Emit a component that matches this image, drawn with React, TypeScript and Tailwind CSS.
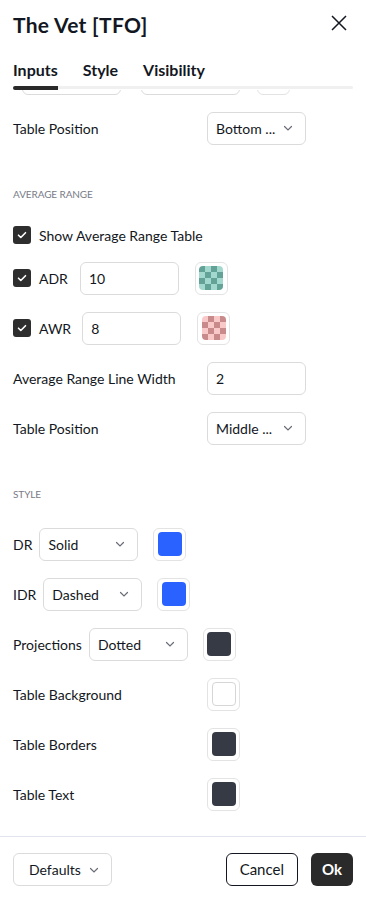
import type { ReactNode } from "react";

function Chevron() {
  return (
    <svg width="18" height="18" viewBox="0 0 18 18" className="shrink-0 text-[#6a6d78]">
      <path d="M5.5 7.5l3.5 3.5 3.5-3.5" fill="none" stroke="currentColor" strokeWidth="1.2" strokeLinecap="round" />
    </svg>
  );
}

function Box({ children, className = "" }: { children?: ReactNode; className?: string }) {
  return (
    <div className={`flex h-[33px] w-[99px] shrink-0 items-center rounded-md border border-[#dbdbdb] bg-white ${className}`}>
      {children}
    </div>
  );
}

function TextInput({ value }: { value: string }) {
  return (
    <Box className="px-2 text-[14px] text-[#131722]">
      <span>{value}</span>
    </Box>
  );
}

function Select({ value, className = "" }: { value: string; className?: string }) {
  return (
    <Box className={`justify-between pr-2 pl-2 text-[14px] text-[#131722] ${className}`}>
      <span className="whitespace-nowrap">{value}</span>
      <Chevron />
    </Box>
  );
}

function Checker({ dark, light, start }: { dark: string; light: string; start: "dark" | "light" }) {
  const cells = Array.from({ length: 16 }, (_, i) => {
    const even = (Math.floor(i / 4) + (i % 4)) % 2 === 0;
    const isDark = start === "dark" ? even : !even;
    return isDark ? dark : light;
  });
  return (
    <div className="grid h-6 w-6 grid-cols-4 overflow-hidden rounded-[4px]">
      {cells.map((c, i) => (
        <div key={i} style={{ backgroundColor: c }} />
      ))}
    </div>
  );
}

function Swatch({ children }: { children: ReactNode }) {
  return (
    <div className="flex h-[33px] w-[33px] shrink-0 items-center justify-center rounded-md border border-[#e3e3e3] bg-white">
      {children}
    </div>
  );
}

function Solid({ color, bordered = false }: { color: string; bordered?: boolean }) {
  return (
    <div
      className={`h-6 w-6 rounded-[4px] ${bordered ? "border border-[#d6d6d6]" : ""}`}
      style={{ backgroundColor: color }}
    />
  );
}

function Checkbox() {
  return (
    <div className="flex h-[18px] w-[18px] shrink-0 items-center justify-center rounded-[3px] bg-[#2e2e2e]">
      <svg width="12" height="12" viewBox="0 0 12 12">
        <path d="M2.5 6.2l2.3 2.3 4.7-4.8" fill="none" stroke="white" strokeWidth="1.6" strokeLinecap="round" strokeLinejoin="round" />
      </svg>
    </div>
  );
}

function Row({ label, children, h = "h-[50px]" }: { label: string; children?: ReactNode; h?: string }) {
  return (
    <div className={`grid ${h} grid-cols-[194px_1fr] items-center px-[13px]`}>
      <span className="text-[14px] text-[#131722]">{label}</span>
      <div className="flex">{children}</div>
    </div>
  );
}

function Section({ title, pb }: { title: string; pb: string }) {
  return (
    <div className={`px-[13px] pt-[35px] ${pb}`}>
      <p className="h-3 text-[10px] leading-3 tracking-[-0.1px] text-[#787b86] uppercase">{title}</p>
    </div>
  );
}

export default function App() {
  return (
    <div className="flex h-[902px] w-[366px] flex-col overflow-hidden bg-white font-[Lato,sans-serif] text-[#131722]">
      {/* header */}
      <div className="flex h-[46px] shrink-0 items-center justify-between pt-[3px] pr-[18px] pl-[13px]">
        <h1 className="text-[21px] font-bold tracking-[0.3px]">The Vet [TFO]</h1>
        <svg width="18" height="18" viewBox="0 0 18 18" className="-mt-[3px]">
          <path d="M2 2l14 14M16 2L2 16" stroke="#131722" strokeWidth="1.5" />
        </svg>
      </div>
      <div className="flex h-[40px] shrink-0 items-end gap-[25px] px-[13px] pb-[4px] text-[16px] font-bold">
        <span>Inputs</span>
        <span>Style</span>
        <span>Visibility</span>
      </div>
      <div className="relative z-10 flex h-[4px] shrink-0 items-start bg-white px-[13px]">
        <div className="h-[4px] w-[45px] rounded-l-full bg-[#2a2a2a]" />
        <div className="h-[3px] flex-1 rounded-r-full bg-[#f0f0f0]" />
      </div>

      {/* scrolled content */}
      <div className="flex-1 overflow-hidden">
        <div className="-mt-[37px]">
          <div className="flex h-[50px] items-center pl-[22px]">
            <Box className="w-[98px]" />
            <div className="w-5" />
            <Box />
            <div className="w-[17px]" />
            <Swatch>
              <div className="mt-[18px] h-[3px] w-5 rounded bg-[#bdbdbd]" />
            </Swatch>
          </div>
          <Row label="Table Position">
            <Select value="Bottom ..." />
          </Row>

          <Section title="Average Range" pb="pb-[17px]" />
          <div className="flex h-[36px] items-center gap-2 px-[13px]">
            <Checkbox />
            <span className="text-[14px]">Show Average Range Table</span>
          </div>
          <div className="flex h-[50px] items-center px-[13px]">
            <Checkbox />
            <span className="ml-2 text-[14px]">ADR</span>
            <div className="ml-[12px]">
              <TextInput value="10" />
            </div>
            <div className="ml-[16px]">
              <Swatch>
                <Checker dark="#62a297" light="#a3d8cf" start="dark" />
              </Swatch>
            </div>
          </div>
          <div className="flex h-[50px] items-center px-[13px]">
            <Checkbox />
            <span className="ml-2 text-[14px]">AWR</span>
            <div className="ml-[11px]">
              <TextInput value="8" />
            </div>
            <div className="ml-[16px]">
              <Swatch>
                <Checker dark="#c98a8c" light="#f9c8c8" start="light" />
              </Swatch>
            </div>
          </div>
          <Row label="Average Range Line Width">
            <TextInput value="2" />
          </Row>
          <Row label="Table Position">
            <Select value="Middle ..." />
          </Row>

          <Section title="Style" pb="pb-[19px]" />
          {[
            { label: "DR", value: "Solid", color: "#2962ff" },
            { label: "IDR", value: "Dashed", color: "#2962ff" },
            { label: "Projections", value: "Dotted", color: "#363a45" },
          ].map((r) => (
            <div key={r.label} className="flex h-[50px] items-center px-[13px]">
              <span className="text-[14px]">{r.label}</span>
              <div className="ml-[7px]">
                <Select value={r.value} />
              </div>
              <div className="ml-[15px]">
                <Swatch>
                  <Solid color={r.color} />
                </Swatch>
              </div>
            </div>
          ))}
          <Row label="Table Background">
            <Swatch>
              <Solid color="#ffffff" bordered />
            </Swatch>
          </Row>
          <Row label="Table Borders">
            <Swatch>
              <Solid color="#363a45" />
            </Swatch>
          </Row>
          <Row label="Table Text">
            <Swatch>
              <Solid color="#363a45" />
            </Swatch>
          </Row>
        </div>
      </div>

      {/* footer */}
      <div className="flex h-[66px] shrink-0 items-center justify-between border-t border-[#e0e3eb] px-[13px]">
        <div className="flex h-[33px] w-[99px] items-center justify-between rounded-md border border-[#dbdbdb] pr-2 pl-[15px] text-[14px]">
          <span>Defaults</span>
          <Chevron />
        </div>
        <div className="flex gap-[13px]">
          <button className="h-[33px] rounded-md border border-[#131722] px-[13px] text-[15px]">Cancel</button>
          <button className="h-[33px] rounded-md bg-[#2a2a2a] px-[11px] text-[15px] font-bold text-white">Ok</button>
        </div>
      </div>
    </div>
  );
}
